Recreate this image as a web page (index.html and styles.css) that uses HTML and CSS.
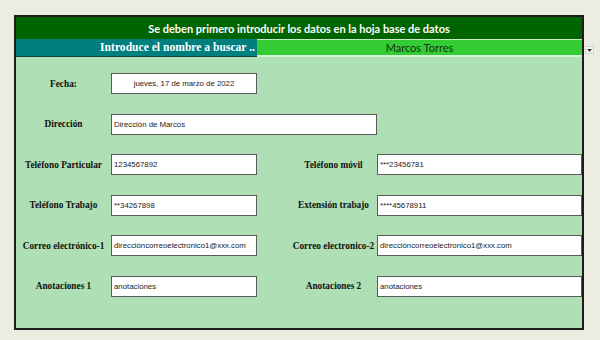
FILE: index.html
```html
<!DOCTYPE html>
<html lang="es">
<head>
<meta charset="utf-8">
<title>Búsqueda</title>
<link rel="stylesheet" href="styles.css">
</head>
<body>
<div class="panel">
  <div class="header">Se deben primero introducir los datos en la hoja base de datos</div>
  <div class="search">
    <div class="search-label">Introduce el nombre a buscar ..</div>
    <div class="search-value">Marcos Torres
      <span class="dropdown"><svg width="5" height="3" viewBox="0 0 5 3"><path d="M0 0H5L2.5 3Z" fill="#333"/></svg></span>
    </div>
  </div>
  <div class="form">
    <div class="label">Fecha:</div>
    <div class="field center">jueves, 17 de marzo de 2022</div>
    <div class="skip"></div>

    <div class="label">Dirección</div>
    <div class="field wide">Dirección de Marcos</div>
    <div class="skip"></div>

    <div class="label">Teléfono Particular</div>
    <div class="field">1234567892</div>
    <div></div>
    <div class="label">Teléfono móvil</div>
    <div class="field">***23456781</div>

    <div class="label">Teléfono Trabajo</div>
    <div class="field">**34267898</div>
    <div></div>
    <div class="label">Extensión trabajo</div>
    <div class="field">****45678911</div>

    <div class="label">Correo electrónico-1</div>
    <div class="field">direccióncorreoelectronico1@xxx.com</div>
    <div></div>
    <div class="label">Correo electronico-2</div>
    <div class="field">direccióncorreoelectronico1@xxx.com</div>

    <div class="label">Anotaciones 1</div>
    <div class="field">anotaciones</div>
    <div></div>
    <div class="label">Anotaciones 2</div>
    <div class="field">anotaciones</div>
  </div>
</div>
</body>
</html>
```
FILE: styles.css
```css
* { box-sizing: border-box; }
body {
  margin: 0;
  background: #ecede0;
  width: 600px;
  height: 340px;
  overflow: hidden;
}
.panel {
  margin: 15px 0 0 14px;
  width: 570px;
  height: 315px;
  border: 2px solid #1c1c1c;
  background: #afdfb4;
  display: flex;
  flex-direction: column;
}
.header {
  height: 22px;
  background: #006400;
  color: #fff;
  font-family: Lato, "Liberation Sans", sans-serif;
  font-weight: bold;
  font-size: 11px;
  display: flex;
  align-items: center;
  justify-content: center;
}
.search {
  height: 18px;
  display: flex;
}
.search-label {
  width: 241px;
  background: #007f7f;
  border-bottom: 1px solid #1c3c3c;
  color: #fff;
  font-family: "Liberation Serif", serif;
  font-weight: bold;
  font-size: 11.6px;
  text-align: right;
  padding-right: 2px;
  line-height: 17px;
}
.search-value {
  flex: 1;
  position: relative;
  background: #33cc33;
  border-top: 1px solid #c9ecc9;
  border-bottom: 2px solid #d6f0d6;
  color: #15301a;
  font-family: Lato, "Liberation Sans", sans-serif;
  font-size: 11px;
  text-align: center;
  line-height: 15px;
}
.dropdown {
  position: absolute;
  left: calc(100% + 3px);
  top: 6px;
  width: 9px;
  height: 8px;
  border: 1px solid #b7dcc8;
  background: #f4f7f2;
  display: flex;
  align-items: center;
  justify-content: center;
}
.form {
  flex: 1;
  display: grid;
  grid-template-columns: 95px 146px 33px 87px 1fr;
  grid-auto-rows: 21px;
  row-gap: 19.6px;
  padding-top: 16px;
  align-content: start;
}
.label {
  font-family: "Liberation Serif", serif;
  font-weight: bold;
  font-size: 9.3px;
  color: #111;
  display: flex;
  align-items: center;
  justify-content: center;
  white-space: nowrap;
}
.field {
  background: #fff;
  border: 1px solid #5a5a5a;
  font-family: "Liberation Sans", sans-serif;
  font-size: 7.8px;
  color: #222;
  display: flex;
  align-items: center;
  padding-left: 2px;
  white-space: nowrap;
  overflow: hidden;
}
.center { justify-content: center; padding-left: 0; }
.wide { grid-column: 2 / 5; }
.skip { grid-column: span 3; }
.wide + .skip { grid-column: span 1; }
```
